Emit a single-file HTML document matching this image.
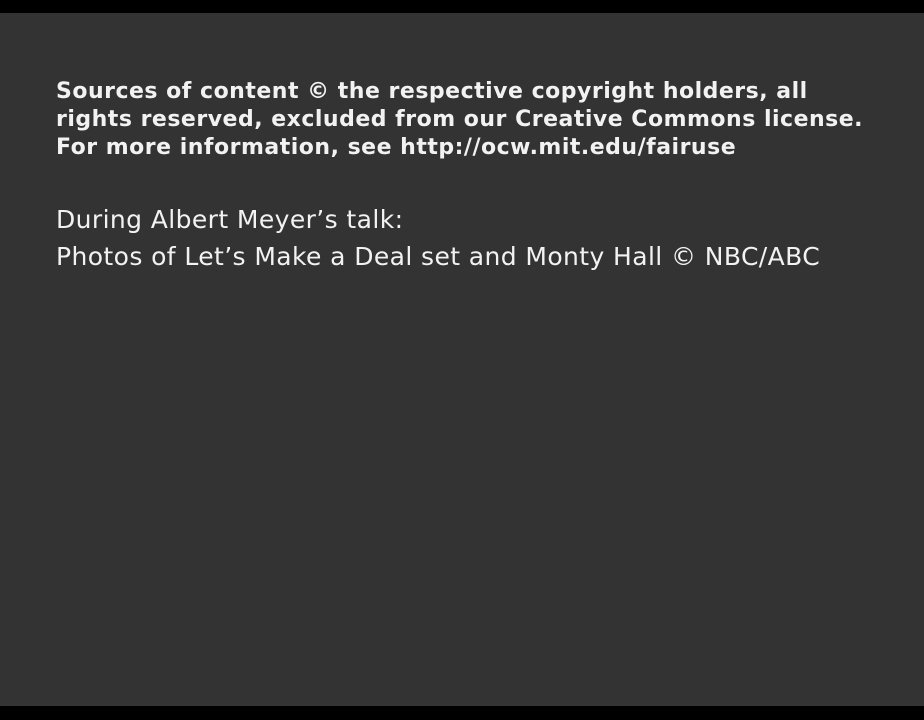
<!DOCTYPE html>
<html><head><style>
html,body{margin:0;padding:0;}
body{width:924px;height:720px;background:#333333;position:relative;overflow:hidden;font-family:"DejaVu Sans","Liberation Sans",sans-serif;color:#f2f2f2;}
.top{position:absolute;left:0;top:0;width:924px;height:13px;background:#000;}
.bot{position:absolute;left:0;top:706px;width:924px;height:14px;background:#000;}
.b{position:absolute;left:56px;top:78px;font-weight:bold;font-size:22px;letter-spacing:0.5px;line-height:28px;white-space:nowrap;}
.r{position:absolute;left:56px;font-size:25px;letter-spacing:0.4px;white-space:nowrap;line-height:30px;}
</style></head><body>
<div class="top"></div>
<div class="b">Sources of content © the respective copyright holders, all<br>rights reserved, excluded from our Creative Commons license.<br>For more information, see http://ocw.mit.edu/fairuse</div>
<div class="r" style="top:205px">During Albert Meyer’s talk:</div>
<div class="r" style="top:242px">Photos of Let’s Make a Deal set and Monty Hall © NBC/ABC</div>
<div class="bot"></div>
</body></html>
